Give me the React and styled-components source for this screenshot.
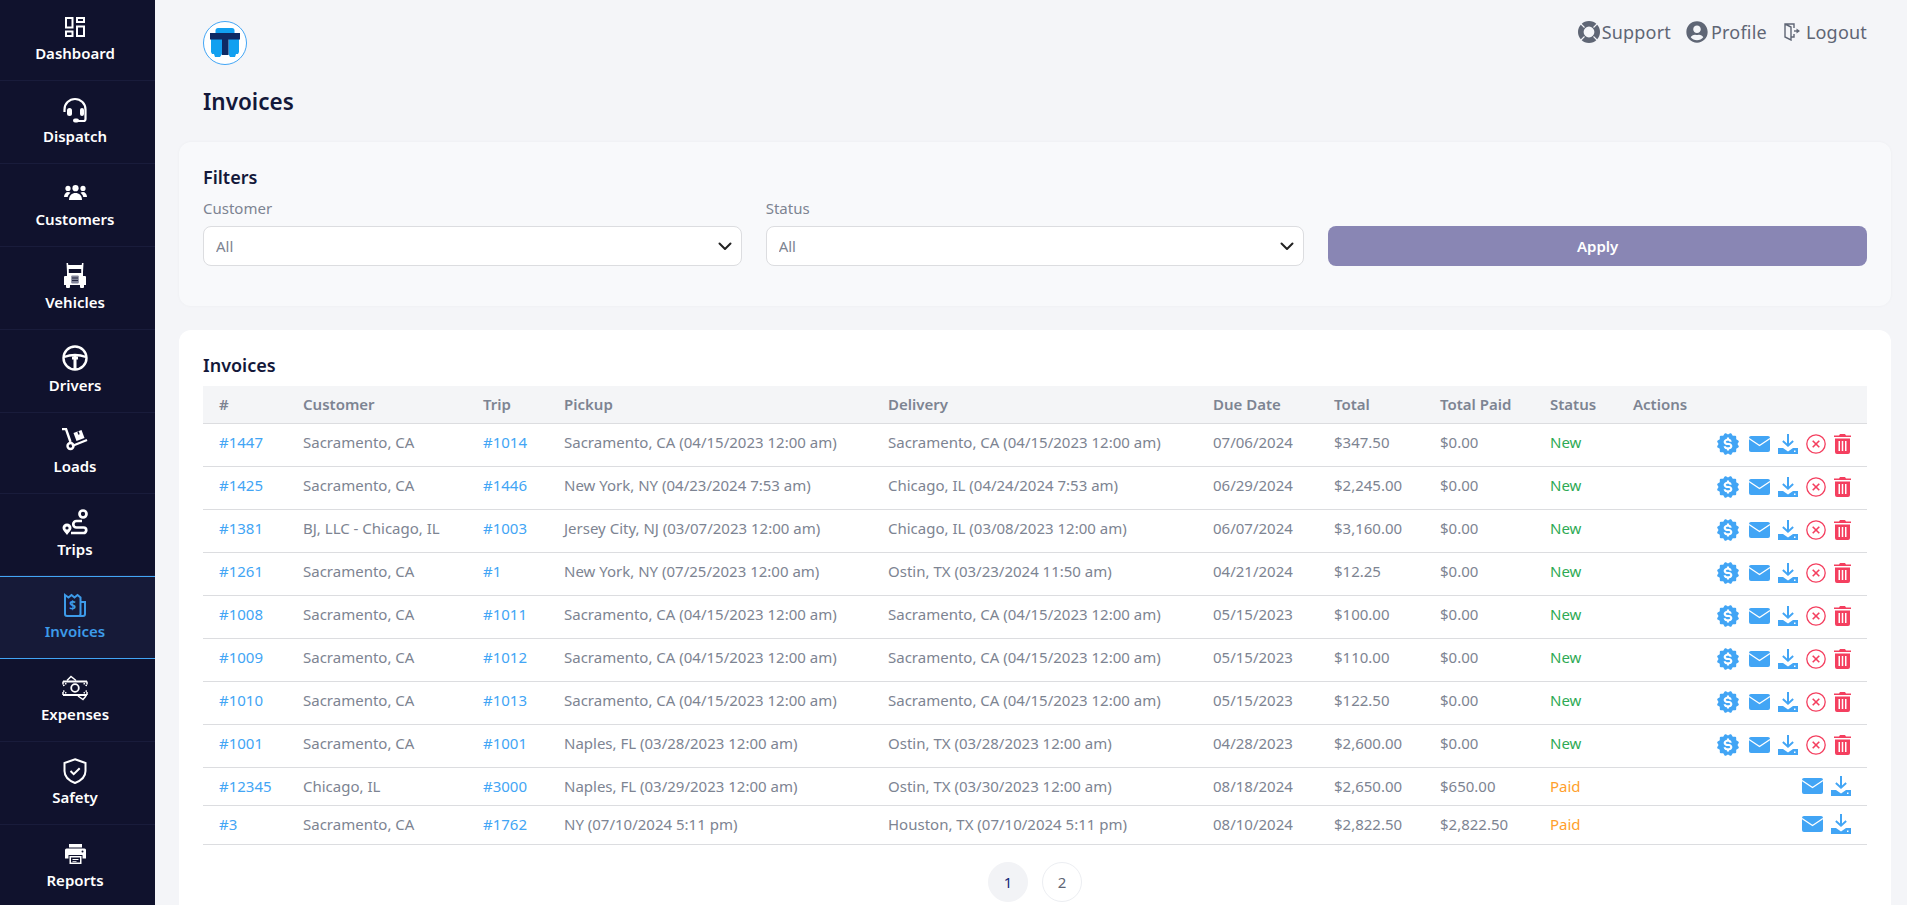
import styled, { createGlobalStyle } from "styled-components";
import { FaUserCircle } from "react-icons/fa";
import { BiSolidBadgeDollar } from "react-icons/bi";

const FONT = '"Noto Sans", "Open Sans", Arial, sans-serif';

const rows = [
  ["#1447", "Sacramento, CA", "#1014", "Sacramento, CA (04/15/2023 12:00 am)", "Sacramento, CA (04/15/2023 12:00 am)", "07/06/2024", "$347.50", "$0.00", "New"],
  ["#1425", "Sacramento, CA", "#1446", "New York, NY (04/23/2024 7:53 am)", "Chicago, IL (04/24/2024 7:53 am)", "06/29/2024", "$2,245.00", "$0.00", "New"],
  ["#1381", "BJ, LLC - Chicago, IL", "#1003", "Jersey City, NJ (03/07/2023 12:00 am)", "Chicago, IL (03/08/2023 12:00 am)", "06/07/2024", "$3,160.00", "$0.00", "New"],
  ["#1261", "Sacramento, CA", "#1", "New York, NY (07/25/2023 12:00 am)", "Ostin, TX (03/23/2024 11:50 am)", "04/21/2024", "$12.25", "$0.00", "New"],
  ["#1008", "Sacramento, CA", "#1011", "Sacramento, CA (04/15/2023 12:00 am)", "Sacramento, CA (04/15/2023 12:00 am)", "05/15/2023", "$100.00", "$0.00", "New"],
  ["#1009", "Sacramento, CA", "#1012", "Sacramento, CA (04/15/2023 12:00 am)", "Sacramento, CA (04/15/2023 12:00 am)", "05/15/2023", "$110.00", "$0.00", "New"],
  ["#1010", "Sacramento, CA", "#1013", "Sacramento, CA (04/15/2023 12:00 am)", "Sacramento, CA (04/15/2023 12:00 am)", "05/15/2023", "$122.50", "$0.00", "New"],
  ["#1001", "Sacramento, CA", "#1001", "Naples, FL (03/28/2023 12:00 am)", "Ostin, TX (03/28/2023 12:00 am)", "04/28/2023", "$2,600.00", "$0.00", "New"],
  ["#12345", "Chicago, IL", "#3000", "Naples, FL (03/29/2023 12:00 am)", "Ostin, TX (03/30/2023 12:00 am)", "08/18/2024", "$2,650.00", "$650.00", "Paid"],
  ["#3", "Sacramento, CA", "#1762", "NY (07/10/2024 5:11 pm)", "Houston, TX (07/10/2024 5:11 pm)", "08/10/2024", "$2,822.50", "$2,822.50", "Paid"],
];

const columns = [
  ["#", 84], ["Customer", 180], ["Trip", 81], ["Pickup", 324], ["Delivery", 325],
  ["Due Date", 121], ["Total", 106], ["Total Paid", 110], ["Status", 83], ["Actions", 250],
];

const DashboardIcon = () => (
  <svg width="20" height="20" viewBox="0 0 20 20" fill="none" stroke="currentColor" strokeWidth="2">
    <rect x="1" y="1" width="6.5" height="9.5" />
    <rect x="12" y="1" width="7" height="4" />
    <rect x="1" y="14.5" width="6.5" height="4.5" />
    <rect x="12" y="9.5" width="7" height="9.5" />
  </svg>
);

const HeadsetIcon = () => (
  <svg width="26" height="26" viewBox="0 0 26 26" fill="none">
    <path d="M2.5 15v-2.5a10.5 10.5 0 0 1 21 0V22a2 2 0 0 1-2 2h-6" stroke="currentColor" strokeWidth="2.2" />
    <rect x="5" y="11" width="5" height="8" rx="2.5" fill="currentColor" />
    <rect x="18" y="11" width="4" height="8" rx="2" fill="currentColor" />
    <rect x="11" y="21.5" width="6" height="4" rx="2" fill="currentColor" />
  </svg>
);

const GroupIcon = () => (
  <svg width="23" height="15" viewBox="0 0 23 15" fill="currentColor">
    <circle cx="4" cy="3.4" r="2.600" />
    <circle cx="11.500" cy="3.200" r="3.100" />
    <circle cx="19" cy="3.400" r="2.600" />
    <path d="M5 15c0-4.500 3-7 6.500-7s6.500 2.500 6.500 7z" />
    <path d="M0 12c0-3 2-5 4-5 1 0 1.800.3 2.500.8C5 9 4 10.500 3.700 12zM23 12c0-3-2-5-4-5-1 0-1.800.3-2.500.8C18 9 19 10.500 19.300 12z" />
  </svg>
);

const TruckIcon = () => (
  <svg width="22" height="25" viewBox="0 0 22 25" fill="currentColor">
    <path d="M2.5 0H4l.3 2h13.400l.3-2h1.500l-.5 9H3z" />
    <rect x="3" y="3" width="16" height="10" />
    <rect x="4.800" y="6" width="12.400" height="4" fill="#10122d" />
    <path d="M1 13h20a1 1 0 0 1 1 1v8H0v-8a1 1 0 0 1 1-1z" />
    <rect x="2" y="21" width="4" height="4" rx="1" />
    <rect x="16" y="21" width="4" height="4" rx="1" />
    <rect x="7.200" y="12.500" width="7.600" height="8" rx="1" fill="#82859a" />
    <path d="M8 15h6M8 17.500h6" stroke="#10122d" strokeWidth="0.8" />
  </svg>
);

const WheelIcon = () => (
  <svg width="26" height="26" viewBox="0 0 26 26" fill="none" stroke="currentColor" strokeWidth="2.400">
    <circle cx="13" cy="13" r="11.500" />
    <path d="M2 12c4-1.500 7-2 11-2s7 .5 11 2" />
    <path d="M13 10v14" strokeWidth="3" />
    <path d="M10 13h6" strokeWidth="3" />
  </svg>
);

const HandTruckIcon = () => (
  <svg width="26" height="23" viewBox="0 0 26 23" fill="none" stroke="currentColor" strokeWidth="2.400">
    <path d="M0 1h4l4.500 13" />
    <path d="M10 18l15-6" />
    <circle cx="8.500" cy="18" r="3" />
    <path d="M11.500 5l8-3 3 8-8 3z" fill="currentColor" stroke="none" />
    <path d="M16 3.500l1 3" stroke="#10122d" strokeWidth="1.500" />
  </svg>
);

const RouteIcon = () => (
  <svg width="26" height="26" viewBox="0 0 26 26" fill="none" stroke="currentColor" strokeWidth="2.700">
    <circle cx="21" cy="5" r="3.500" />
    <path d="M20 12h-5.500a3.200 3.200 0 0 0 0 6.500h7a2.700 2.700 0 0 1 0 5.500H9" />
    <path d="M5 14.500a4.500 4.500 0 0 0-4.500 4.500c0 2.500 3 4.500 4.500 7 1.500-2.500 4.500-4.500 4.500-7A4.500 4.500 0 0 0 5 14.500z" fill="currentColor" stroke="none" />
    <circle cx="5" cy="19" r="1.600" fill="#10122d" stroke="none" />
  </svg>
);

const ReceiptIcon = () => (
  <svg width="24" height="24" viewBox="0 0 24 24" fill="none" stroke="currentColor" strokeWidth="2">
    <path d="M2 2l3.500 2.500L8.500 2l3 2.500L14.500 2l3 2.500V21a2 2 0 0 1-2 2H4a2 2 0 0 1-2-2z" />
    <path d="M17.500 9H22v12a2 2 0 0 1-2 2h-4.500" />
    <text x="9.700" y="17" fontSize="12" fontWeight="700" fill="currentColor" stroke="none" textAnchor="middle" fontFamily={FONT}>$</text>
  </svg>
);

const MoneyIcon = () => (
  <svg width="26" height="26" viewBox="0 0 26 26" fill="none" stroke="currentColor" strokeWidth="1.500">
    <path d="M1 6.500h24M1 20h24" strokeWidth="1.800" />
    <path d="M1 6.500v3M25 6.500v3M1 17v3M25 17v3" />
    <circle cx="13" cy="13" r="3.800" strokeWidth="1.800" />
    <path d="M1 10.500c2 0 3-1.500 3.500-4M25 10.500c-2 0-3-1.500-3.500-4M1 16c2 0 3 1.500 3.500 4M25 16c-2 0-3 1.500-3.500 4" strokeDasharray="1.500 1.200" />
    <path d="M5 5.500L9 1.500l5 4M16 21l5 3.500 3-3.500" />
  </svg>
);

const ShieldIcon = () => (
  <svg width="24" height="26" viewBox="0 0 24 26" fill="none" stroke="currentColor" strokeWidth="2">
    <path d="M12 1.200L22.500 5v8c0 5.500-4 9.500-10.500 12C5.500 22.500 1.500 18.500 1.500 13V5z" />
    <path d="M7.500 13l3.200 3.200 6-6" />
  </svg>
);

const PrinterIcon = () => (
  <svg width="21" height="20" viewBox="0 0 21 20" fill="currentColor">
    <path d="M4 0h13v3.500H4z" />
    <path d="M1.500 4.500h18A1.500 1.500 0 0 1 21 6v8.500h-3.500V11h-14v3.500H0V6a1.500 1.500 0 0 1 1.500-1.500z" />
    <path fillRule="evenodd" d="M4.500 12h12v8h-12zM6 13.500V18.500h9v-5zM7.500 15h6v1h-6zM7.500 17h4v.8h-4z" />
    <circle cx="17.500" cy="7.500" r="1" fill="#10122d" />
  </svg>
);

const RingIcon = () => (
  <svg width="22" height="22" viewBox="0 0 22 22" fill="none">
    <circle cx="11" cy="11" r="8.200" stroke="currentColor" strokeWidth="5.600" />
    <path d="M6.500 6.500L3 3M15.500 6.500L19 3M6.500 15.500L3 19M15.500 15.500L19 19" stroke="#f4f5f8" strokeWidth="1.100" />
  </svg>
);

const DoorIcon = () => (
  <svg width="16" height="18" viewBox="0 0 16 18" fill="none" stroke="currentColor" strokeWidth="1.400">
    <path d="M10 5V1H1v13l6 3V4L1 1" />
    <path d="M7 14h3v-3" />
    <path d="M10 8h3" />
    <path d="M12.500 5.500L16 8l-3.500 2.500z" fill="currentColor" stroke="none" />
  </svg>
);

const ChevronIcon = () => (
  <svg width="14" height="14" viewBox="0 0 14 14" fill="none" stroke="#222" strokeWidth="2" strokeLinecap="round" strokeLinejoin="round">
    <path d="M1.500 4.500L7 10l5.500-5.500" />
  </svg>
);

const MailIcon = () => (
  <svg width="21" height="16" viewBox="0 0 21 16">
    <rect width="21" height="16" rx="2" fill="currentColor" />
    <path d="M0 2.500l10.500 7 10.500-7" fill="none" stroke="#fff" strokeWidth="1.300" />
  </svg>
);

const DownloadIcon = () => (
  <svg width="20" height="20" viewBox="0 0 20 20" fill="currentColor">
    <path d="M9 0h2v9.500l3.500-3.200 1.300 1.400L10 13 4.200 7.700l1.300-1.400L9 9.500z" />
    <path d="M0 14h5l5 3.500 5-3.500h5v6H0z" />
    <rect x="16" y="16.500" width="1.500" height="1.500" fill="#fff" />
  </svg>
);

const CancelIcon = () => (
  <svg width="20" height="20" viewBox="0 0 20 20" fill="none" stroke="currentColor" strokeWidth="1.300">
    <circle cx="10" cy="10" r="9.200" />
    <path d="M6.700 6.700l6.600 6.600M13.300 6.700l-6.600 6.600" strokeWidth="1.600" />
  </svg>
);

const TrashIcon = () => (
  <svg width="17" height="20" viewBox="0 0 17 20" fill="currentColor">
    <path d="M6 0h5l1 1.500h5V3H0V1.500h5z" />
    <path fillRule="evenodd" d="M1 4.500h15V18a2 2 0 0 1-2 2H3a2 2 0 0 1-2-2zM4.500 7v10H6V7zm3.250 0v10h1.500V7zM11 7v10h1.500V7z" />
  </svg>
);

const LogoMark = () => (
  <svg width="44" height="44" viewBox="0 0 44 44">
    <circle cx="22" cy="22" r="21.500" fill="#fff" stroke="#42a5f5" />
    <path d="M15 7h14a2.500 2.500 0 0 1 2.500 2.500V12h-19V9.500A2.500 2.500 0 0 1 15 7z" fill="#12a0f0" />
    <path d="M8 18h11v15l-2 3h-5l-1-3H9l-1-2zM25.500 18H36v13l-1 2h-2l-1 3h-5l-1.500-3z" fill="#12a0f0" />
    <path d="M7 12h30v6.500H25.500V34h-6.500V18.500H7z" fill="#0f2a63" />
  </svg>
);

const navItems = [
  { label: "Dashboard", icon: <DashboardIcon />, first: true },
  { label: "Dispatch", icon: <HeadsetIcon /> },
  { label: "Customers", icon: <GroupIcon /> },
  { label: "Vehicles", icon: <TruckIcon /> },
  { label: "Drivers", icon: <WheelIcon /> },
  { label: "Loads", icon: <HandTruckIcon />, short: true },
  { label: "Trips", icon: <RouteIcon /> },
  { label: "Invoices", icon: <ReceiptIcon />, active: true },
  { label: "Expenses", icon: <MoneyIcon /> },
  { label: "Safety", icon: <ShieldIcon /> },
  { label: "Reports", icon: <PrinterIcon /> },
];

function App() {
  return (
    <>
      <GlobalStyle />
      <Layout>
        <Sidebar>
          {navItems.map((item) => (
            <NavItem key={item.label} $active={item.active} $first={item.first} $short={item.short}>
              <NavIcon>{item.icon}</NavIcon>
              {item.label}
            </NavItem>
          ))}
        </Sidebar>
        <Main>
          <TopBar>
            <LogoMark />
            <TopLinks>
              <TopLink $gap={2}><RingIcon />Support</TopLink>
              <TopLink $gap={3}><FaUserCircle size={22} />Profile</TopLink>
              <TopLink $gap={6} $push={2}><DoorIcon />Logout</TopLink>
            </TopLinks>
          </TopBar>
          <PageTitle>Invoices</PageTitle>
          <FilterCard>
            <CardTitle>Filters</CardTitle>
            <FilterGrid>
              <Field>
                <FieldLabel>Customer</FieldLabel>
                <SelectWrap>
                  <Select defaultValue="All"><option>All</option></Select>
                  <ChevronSlot><ChevronIcon /></ChevronSlot>
                </SelectWrap>
              </Field>
              <Field>
                <FieldLabel>Status</FieldLabel>
                <SelectWrap>
                  <Select defaultValue="All"><option>All</option></Select>
                  <ChevronSlot><ChevronIcon /></ChevronSlot>
                </SelectWrap>
              </Field>
              <ApplyButton>Apply</ApplyButton>
            </FilterGrid>
          </FilterCard>
          <TableCard>
            <CardTitle>Invoices</CardTitle>
            <Table>
              <colgroup>
                {columns.map(([name, width]) => <col key={name} width={width} />)}
              </colgroup>
              <thead>
                <tr>
                  {columns.map(([name]) => <HeadCell key={name}>{name}</HeadCell>)}
                </tr>
              </thead>
              <tbody>
                {rows.map((row) => {
                  const isNew = row[8] === "New";
                  return (
                    <Row key={row[0]} $short={!isNew}>
                      <Cell $lift={isNew}><LinkText>{row[0]}</LinkText></Cell>
                      <Cell $lift={isNew}>{row[1]}</Cell>
                      <Cell $lift={isNew}><LinkText>{row[2]}</LinkText></Cell>
                      <Cell $lift={isNew}>{row[3]}</Cell>
                      <Cell $lift={isNew}>{row[4]}</Cell>
                      <Cell $lift={isNew}>{row[5]}</Cell>
                      <Cell $lift={isNew}>{row[6]}</Cell>
                      <Cell $lift={isNew}>{row[7]}</Cell>
                      <Cell $lift={isNew}><StatusText $paid={!isNew}>{row[8]}</StatusText></Cell>
                      <Cell>
                        <Actions>
                          {isNew && <ActionIcon><BiSolidBadgeDollar size={26} /></ActionIcon>}
                          <ActionIcon><MailIcon /></ActionIcon>
                          <ActionIcon><DownloadIcon /></ActionIcon>
                          {isNew && <ActionIcon $danger><CancelIcon /></ActionIcon>}
                          {isNew && <ActionIcon $danger><TrashIcon /></ActionIcon>}
                        </Actions>
                      </Cell>
                    </Row>
                  );
                })}
              </tbody>
            </Table>
            <Pagination>
              <PageButton $current>1</PageButton>
              <PageButton>2</PageButton>
            </Pagination>
          </TableCard>
        </Main>
      </Layout>
    </>
  );
}

const GlobalStyle = createGlobalStyle`
  * {
    box-sizing: border-box;
  }

  html,
  body {
    margin: 0;
    height: 100%;
    overflow: hidden;
    font-family: ${FONT};
    background: #f4f5f8;
  }
`;

const Layout = styled.div`
  display: grid;
  grid-template-columns: 155px 1fr;
  height: 100vh;
  overflow: hidden;
`;

const Sidebar = styled.nav`
  background: #10122d;
  color: #fff;
  overflow: hidden;
`;

const NavItem = styled.div`
  display: flex;
  flex-direction: column;
  align-items: center;
  height: ${(p) => (p.$first || p.$short ? 81 : 82.9)}px;
  padding: ${(p) => (p.$first || p.$short ? 14 : p.$active ? 15 : 16)}px 5px 0 0;
  font-size: 15px;
  font-weight: 600;
  line-height: 20px;
  color: ${(p) => (p.$active ? "#3d9be9" : "#fff")};
  background: ${(p) => (p.$active ? "#161a38" : "transparent")};
  border-bottom: 1px solid ${(p) => (p.$active ? "#42a5f5" : "#191c3b")};
  border-top: ${(p) => (p.$active ? "1px solid #42a5f5" : "0")};
`;

const NavIcon = styled.div`
  display: flex;
  align-items: center;
  justify-content: center;
  height: 25px;
  margin-bottom: 4px;
`;

const Main = styled.main`
  min-width: 0;
  padding: 21px 16px 0 24px;
`;

const TopBar = styled.header`
  display: flex;
  align-items: flex-start;
  justify-content: space-between;
  padding: 0 24px;
`;

const TopLinks = styled.div`
  display: flex;
  align-items: center;
  gap: 15px;
  height: 22px;
`;

const TopLink = styled.a`
  display: flex;
  align-items: center;
  gap: ${(p) => p.$gap}px;
  margin-left: ${(p) => p.$push || 0}px;
  font-size: 18px;
  letter-spacing: 0.2px;
  color: #5f6675;
`;

const PageTitle = styled.h1`
  margin: 22px 0 25px 24px;
  font-size: 22.5px;
  font-weight: 600;
  line-height: 30px;
  color: #13183a;
`;

const Card = styled.section`
  border-radius: 12px;
  padding: 23px 24px;
`;

const FilterCard = styled(Card)`
  height: 164px;
  margin-bottom: 24px;
  background: #f8f9fb;
  box-shadow: 0 0 3px rgba(20, 30, 60, 0.04);
`;

const TableCard = styled(Card)`
  background: #fff;
  border-radius: 12px 12px 0 0;
  min-height: 600px;
`;

const CardTitle = styled.h2`
  margin: 0 0 9px;
  font-size: 18px;
  font-weight: 600;
  line-height: 24px;
  color: #13183a;
`;

const FilterGrid = styled.div`
  display: grid;
  grid-template-columns: repeat(3, 1fr);
  column-gap: 24px;
  align-items: end;
`;

const Field = styled.label`
  display: block;
`;

const FieldLabel = styled.div`
  margin-bottom: 8px;
  font-size: 15px;
  line-height: 20px;
  color: #7d8492;
`;

const SelectWrap = styled.div`
  position: relative;
`;

const Select = styled.select`
  display: block;
  width: 100%;
  height: 40px;
  padding: 0 12px;
  border: 1px solid #dcdde0;
  border-radius: 8px;
  background: #fff;
  appearance: none;
  font-family: inherit;
  font-size: 15px;
  color: #7d8492;
`;

const ChevronSlot = styled.span`
  position: absolute;
  top: 13px;
  right: 10px;
  line-height: 0;
`;

const ApplyButton = styled.button`
  height: 40px;
  border: 0;
  border-radius: 8px;
  background: #8986b4;
  font-family: inherit;
  font-size: 15px;
  font-weight: 600;
  color: #fff;
`;

const Table = styled.table`
  width: 100%;
  border-collapse: collapse;
  table-layout: fixed;
`;

const HeadCell = styled.th`
  height: 37px;
  padding: 0 0 0 16px;
  background: #f4f5f7;
  border-bottom: 1px solid #dcdde0;
  font-size: 15px;
  font-weight: 600;
  text-align: left;
  color: #7d8492;
`;

const Row = styled.tr`
  height: ${(p) => (p.$short ? 38.5 : 43)}px;
`;

const Cell = styled.td`
  padding: 0 0 ${(p) => (p.$lift ? 5 : 1)}px 16px;
  border-bottom: 1px solid #dcdde0;
  font-size: 15px;
  color: #7d8492;
  white-space: nowrap;
`;

const LinkText = styled.a`
  color: #42a5f5;
`;

const StatusText = styled.span`
  font-weight: 400;
  color: ${(p) => (p.$paid ? "#ff9f2d" : "#2eaa55")};
`;

const Actions = styled.div`
  display: flex;
  align-items: center;
  justify-content: flex-end;
  gap: 8px;
  padding-right: 16px;
`;

const ActionIcon = styled.span`
  display: flex;
  align-items: center;
  height: 26px;
  color: ${(p) => (p.$danger ? "#f43f5f" : "#42a5f5")};
`;

const Pagination = styled.div`
  display: flex;
  justify-content: center;
  gap: 14px;
  margin-top: 17px;
`;

const PageButton = styled.button`
  width: 40px;
  height: 40px;
  border: 1px solid ${(p) => (p.$current ? "#f2f3f6" : "#eceef2")};
  border-radius: 50%;
  background: ${(p) => (p.$current ? "#f2f3f6" : "#fff")};
  font-family: inherit;
  font-size: 15px;
  color: ${(p) => (p.$current ? "#13287a" : "#5f6675")};
`;

export default App;
